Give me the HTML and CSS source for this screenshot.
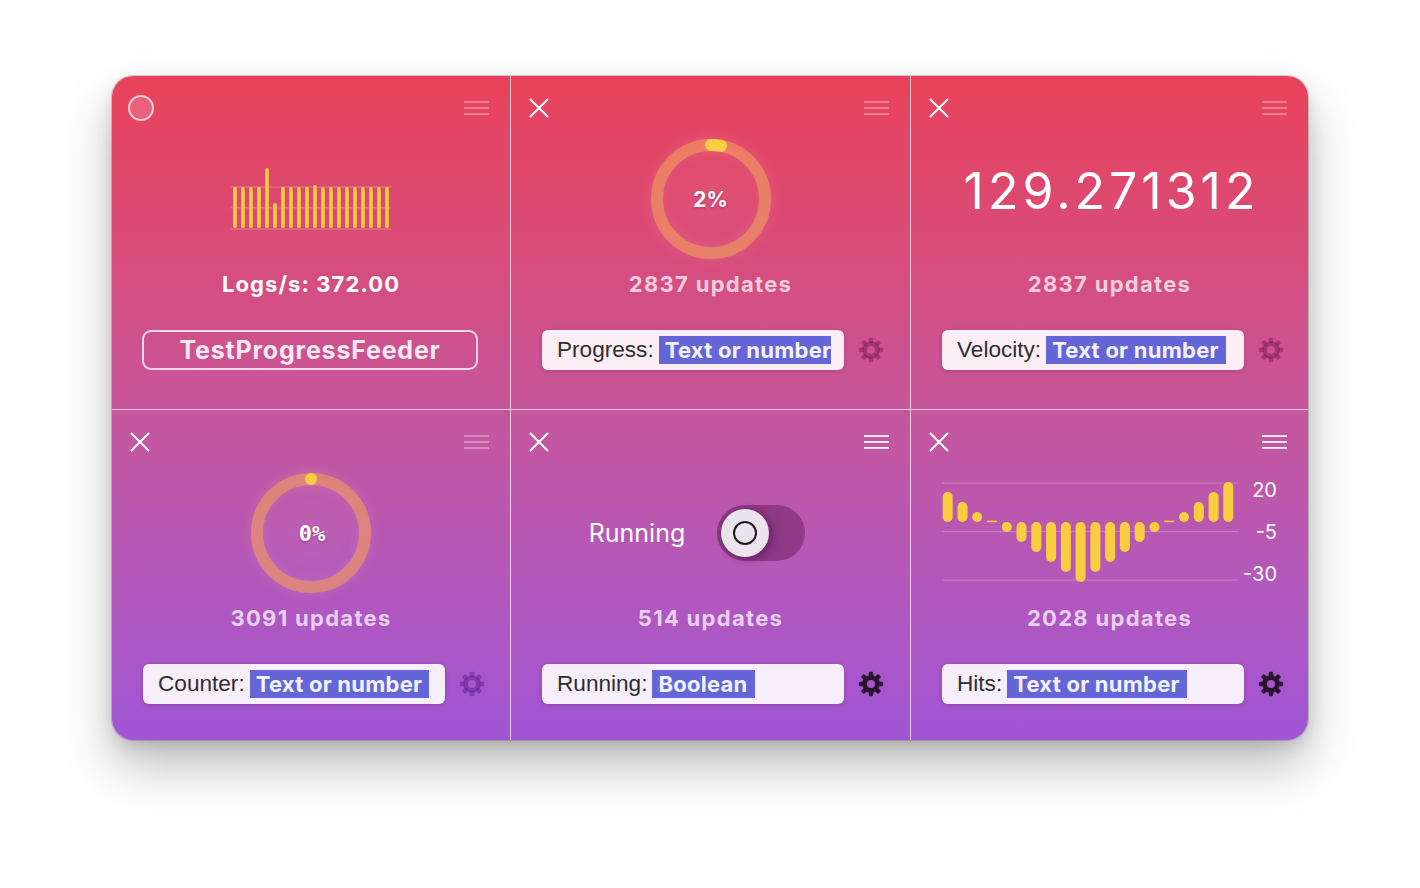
FILE: index.html
```html
<!DOCTYPE html>
<html lang="en">
<head>
<meta charset="utf-8">
<title>Dashboard</title>
<link rel="stylesheet" href="styles.css">
</head>
<body>
<div class="window">

  <!-- Cell 1 -->
  <section class="cell rb bb">
    <header class="head">
      <span class="rec-dot"></span>
      <svg class="menu faded" width="25" height="14" viewBox="0 0 25 14"><rect x="0" y="0.2" width="25" height="1.6"/><rect x="0" y="6.2" width="25" height="1.6"/><rect x="0" y="12.2" width="25" height="1.6"/></svg>
    </header>
    <div class="visual">
      <svg class="logs-chart" width="160" height="66" viewBox="0 0 160 66">
        <g class="grid-lines">
          <rect x="0" y="20.5" width="160" height="1.2"/>
          <rect x="0" y="41.2" width="160" height="1.2"/>
          <rect x="0" y="62.4" width="160" height="1.2"/>
        </g>
        <g class="ybars">
          <line x1="4" y1="22.5" x2="4" y2="60.5"/>
          <line x1="12" y1="22.5" x2="12" y2="60.5"/>
          <line x1="20" y1="22.5" x2="20" y2="60.5"/>
          <line x1="28" y1="22.5" x2="28" y2="60.5"/>
          <line x1="36" y1="3.8" x2="36" y2="60.5"/>
          <line x1="44" y1="38.8" x2="44" y2="60.5"/>
          <line x1="52" y1="22.5" x2="52" y2="60.5"/>
          <line x1="60" y1="22.5" x2="60" y2="60.5"/>
          <line x1="68" y1="22.5" x2="68" y2="60.5"/>
          <line x1="76" y1="22.5" x2="76" y2="60.5"/>
          <line x1="84" y1="20.8" x2="84" y2="60.5"/>
          <line x1="92" y1="23.1" x2="92" y2="60.5"/>
          <line x1="100" y1="22.5" x2="100" y2="60.5"/>
          <line x1="108" y1="22.5" x2="108" y2="60.5"/>
          <line x1="116" y1="22.5" x2="116" y2="60.5"/>
          <line x1="124" y1="22.5" x2="124" y2="60.5"/>
          <line x1="132" y1="22.5" x2="132" y2="60.5"/>
          <line x1="140" y1="22.5" x2="140" y2="60.5"/>
          <line x1="148" y1="22.5" x2="148" y2="60.5"/>
          <line x1="156" y1="22.5" x2="156" y2="60.5"/>
        </g>
      </svg>
    </div>
    <div class="caption bright">Logs/s: 372.00</div>
    <div class="row row-feeder">
      <div class="feeder">TestProgressFeeder</div>
    </div>
  </section>

  <!-- Cell 2 -->
  <section class="cell rb bb">
    <header class="head">
      <svg class="close" width="20" height="20" viewBox="0 0 20 20"><path d="M1 1 L19 19 M19 1 L1 19"/></svg>
      <svg class="menu faded" width="25" height="14" viewBox="0 0 25 14"><rect x="0" y="0.2" width="25" height="1.6"/><rect x="0" y="6.2" width="25" height="1.6"/><rect x="0" y="12.2" width="25" height="1.6"/></svg>
    </header>
    <div class="visual">
      <div class="ring-wrap">
        <svg class="ring ring-orange" width="120" height="120" viewBox="0 0 120 120">
          <circle class="track" cx="60" cy="60" r="54"/>
          <circle class="arc" cx="60" cy="60" r="54" stroke-dasharray="10 400" transform="rotate(-90 60 60)"/>
        </svg>
        <span class="ring-label">2%</span>
      </div>
    </div>
    <div class="caption">2837 updates</div>
    <div class="row">
      <div class="field"><div class="field-inner"><span class="label">Progress:</span><span class="hl">Text or number</span></div></div>
      <svg class="gear gear-faded" width="26" height="26" viewBox="0 0 24 24"><circle cx="12" cy="12" r="5.9" fill="none" stroke="currentColor" stroke-width="4.4"/><g fill="currentColor"><rect x="9.9" y="0.8" width="4.2" height="5" rx="1"/><rect x="9.9" y="0.8" width="4.2" height="5" rx="1" transform="rotate(45 12 12)"/><rect x="9.9" y="0.8" width="4.2" height="5" rx="1" transform="rotate(90 12 12)"/><rect x="9.9" y="0.8" width="4.2" height="5" rx="1" transform="rotate(135 12 12)"/><rect x="9.9" y="0.8" width="4.2" height="5" rx="1" transform="rotate(180 12 12)"/><rect x="9.9" y="0.8" width="4.2" height="5" rx="1" transform="rotate(225 12 12)"/><rect x="9.9" y="0.8" width="4.2" height="5" rx="1" transform="rotate(270 12 12)"/><rect x="9.9" y="0.8" width="4.2" height="5" rx="1" transform="rotate(315 12 12)"/></g></svg>
    </div>
  </section>

  <!-- Cell 3 -->
  <section class="cell bb">
    <header class="head">
      <svg class="close" width="20" height="20" viewBox="0 0 20 20"><path d="M1 1 L19 19 M19 1 L1 19"/></svg>
      <svg class="menu faded" width="25" height="14" viewBox="0 0 25 14"><rect x="0" y="0.2" width="25" height="1.6"/><rect x="0" y="6.2" width="25" height="1.6"/><rect x="0" y="12.2" width="25" height="1.6"/></svg>
    </header>
    <div class="visual">
      <div class="big-number">129.271312</div>
    </div>
    <div class="caption">2837 updates</div>
    <div class="row">
      <div class="field"><div class="field-inner"><span class="label">Velocity:</span><span class="hl">Text or number</span></div></div>
      <svg class="gear gear-faded" width="26" height="26" viewBox="0 0 24 24"><circle cx="12" cy="12" r="5.9" fill="none" stroke="currentColor" stroke-width="4.4"/><g fill="currentColor"><rect x="9.9" y="0.8" width="4.2" height="5" rx="1"/><rect x="9.9" y="0.8" width="4.2" height="5" rx="1" transform="rotate(45 12 12)"/><rect x="9.9" y="0.8" width="4.2" height="5" rx="1" transform="rotate(90 12 12)"/><rect x="9.9" y="0.8" width="4.2" height="5" rx="1" transform="rotate(135 12 12)"/><rect x="9.9" y="0.8" width="4.2" height="5" rx="1" transform="rotate(180 12 12)"/><rect x="9.9" y="0.8" width="4.2" height="5" rx="1" transform="rotate(225 12 12)"/><rect x="9.9" y="0.8" width="4.2" height="5" rx="1" transform="rotate(270 12 12)"/><rect x="9.9" y="0.8" width="4.2" height="5" rx="1" transform="rotate(315 12 12)"/></g></svg>
    </div>
  </section>

  <!-- Cell 4 -->
  <section class="cell rb">
    <header class="head">
      <svg class="close" width="20" height="20" viewBox="0 0 20 20"><path d="M1 1 L19 19 M19 1 L1 19"/></svg>
      <svg class="menu faded" width="25" height="14" viewBox="0 0 25 14"><rect x="0" y="0.2" width="25" height="1.6"/><rect x="0" y="6.2" width="25" height="1.6"/><rect x="0" y="12.2" width="25" height="1.6"/></svg>
    </header>
    <div class="visual">
      <div class="ring-wrap">
        <svg class="ring ring-orange" width="120" height="120" viewBox="0 0 120 120">
          <circle class="track" cx="60" cy="60" r="54"/>
          <circle class="arc" cx="60" cy="60" r="54" stroke-dasharray="0.01 400" transform="rotate(-90 60 60)"/>
        </svg>
        <span class="ring-label mono">0%</span>
      </div>
    </div>
    <div class="caption">3091 updates</div>
    <div class="row">
      <div class="field"><div class="field-inner"><span class="label">Counter:</span><span class="hl">Text or number</span></div></div>
      <svg class="gear gear-purple" width="26" height="26" viewBox="0 0 24 24"><circle cx="12" cy="12" r="5.9" fill="none" stroke="currentColor" stroke-width="4.4"/><g fill="currentColor"><rect x="9.9" y="0.8" width="4.2" height="5" rx="1"/><rect x="9.9" y="0.8" width="4.2" height="5" rx="1" transform="rotate(45 12 12)"/><rect x="9.9" y="0.8" width="4.2" height="5" rx="1" transform="rotate(90 12 12)"/><rect x="9.9" y="0.8" width="4.2" height="5" rx="1" transform="rotate(135 12 12)"/><rect x="9.9" y="0.8" width="4.2" height="5" rx="1" transform="rotate(180 12 12)"/><rect x="9.9" y="0.8" width="4.2" height="5" rx="1" transform="rotate(225 12 12)"/><rect x="9.9" y="0.8" width="4.2" height="5" rx="1" transform="rotate(270 12 12)"/><rect x="9.9" y="0.8" width="4.2" height="5" rx="1" transform="rotate(315 12 12)"/></g></svg>
    </div>
  </section>

  <!-- Cell 5 -->
  <section class="cell rb">
    <header class="head">
      <svg class="close" width="20" height="20" viewBox="0 0 20 20"><path d="M1 1 L19 19 M19 1 L1 19"/></svg>
      <svg class="menu solid" width="25" height="14" viewBox="0 0 25 14"><rect x="0" y="0.2" width="25" height="1.8"/><rect x="0" y="6.1" width="25" height="1.8"/><rect x="0" y="12" width="25" height="1.8"/></svg>
    </header>
    <div class="visual">
      <div class="switch-group">
        <span class="switch-label">Running</span>
        <div class="switch">
          <div class="knob"><span class="knob-ring"></span></div>
        </div>
      </div>
    </div>
    <div class="caption">514 updates</div>
    <div class="row">
      <div class="field"><div class="field-inner"><span class="label">Running:</span><span class="hl">Boolean</span></div></div>
      <svg class="gear gear-dark" width="26" height="26" viewBox="0 0 24 24"><circle cx="12" cy="12" r="5.9" fill="none" stroke="currentColor" stroke-width="4.4"/><g fill="currentColor"><rect x="9.9" y="0.8" width="4.2" height="5" rx="1"/><rect x="9.9" y="0.8" width="4.2" height="5" rx="1" transform="rotate(45 12 12)"/><rect x="9.9" y="0.8" width="4.2" height="5" rx="1" transform="rotate(90 12 12)"/><rect x="9.9" y="0.8" width="4.2" height="5" rx="1" transform="rotate(135 12 12)"/><rect x="9.9" y="0.8" width="4.2" height="5" rx="1" transform="rotate(180 12 12)"/><rect x="9.9" y="0.8" width="4.2" height="5" rx="1" transform="rotate(225 12 12)"/><rect x="9.9" y="0.8" width="4.2" height="5" rx="1" transform="rotate(270 12 12)"/><rect x="9.9" y="0.8" width="4.2" height="5" rx="1" transform="rotate(315 12 12)"/></g></svg>
    </div>
  </section>

  <!-- Cell 6 -->
  <section class="cell">
    <header class="head">
      <svg class="close" width="20" height="20" viewBox="0 0 20 20"><path d="M1 1 L19 19 M19 1 L1 19"/></svg>
      <svg class="menu solid" width="25" height="14" viewBox="0 0 25 14"><rect x="0" y="0.2" width="25" height="1.8"/><rect x="0" y="6.1" width="25" height="1.8"/><rect x="0" y="12" width="25" height="1.8"/></svg>
    </header>
    <div class="visual">
      <div class="hits-chart">
        <svg class="hits-svg" width="296" height="102" viewBox="0 0 296 102">
          <g class="grid-lines">
            <rect x="0" y="0.5" width="296" height="1.2"/>
            <rect x="0" y="49" width="296" height="1.2"/>
            <rect x="0" y="97.5" width="296" height="1.2"/>
          </g>
          <g class="ybars">
            <rect x="0.7" y="10" width="10" height="30" rx="5"/>
            <rect x="15.5" y="20" width="10" height="20" rx="5"/>
            <rect x="30.2" y="30" width="10" height="10" rx="5"/>
            <rect x="45" y="38.6" width="10" height="1.6"/>
            <rect x="59.8" y="40" width="10" height="10" rx="5"/>
            <rect x="74.5" y="40" width="10" height="20" rx="5"/>
            <rect x="89.3" y="40" width="10" height="30" rx="5"/>
            <rect x="104.1" y="40" width="10" height="40" rx="5"/>
            <rect x="118.9" y="40" width="10" height="50" rx="5"/>
            <rect x="133.6" y="40" width="10" height="60" rx="5"/>
            <rect x="148.4" y="40" width="10" height="50" rx="5"/>
            <rect x="163.2" y="40" width="10" height="40" rx="5"/>
            <rect x="177.9" y="40" width="10" height="30" rx="5"/>
            <rect x="192.7" y="40" width="10" height="20" rx="5"/>
            <rect x="207.5" y="40" width="10" height="10" rx="5"/>
            <rect x="222.2" y="38.6" width="10" height="1.6"/>
            <rect x="237" y="30" width="10" height="10" rx="5"/>
            <rect x="251.8" y="20" width="10" height="20" rx="5"/>
            <rect x="266.6" y="10" width="10" height="30" rx="5"/>
            <rect x="281.3" y="0" width="10" height="40" rx="5"/>
          </g>
        </svg>
        <div class="axis">
          <span>20</span>
          <span>-5</span>
          <span>-30</span>
        </div>
      </div>
    </div>
    <div class="caption">2028 updates</div>
    <div class="row">
      <div class="field"><div class="field-inner"><span class="label">Hits:</span><span class="hl">Text or number</span></div></div>
      <svg class="gear gear-dark" width="26" height="26" viewBox="0 0 24 24"><circle cx="12" cy="12" r="5.9" fill="none" stroke="currentColor" stroke-width="4.4"/><g fill="currentColor"><rect x="9.9" y="0.8" width="4.2" height="5" rx="1"/><rect x="9.9" y="0.8" width="4.2" height="5" rx="1" transform="rotate(45 12 12)"/><rect x="9.9" y="0.8" width="4.2" height="5" rx="1" transform="rotate(90 12 12)"/><rect x="9.9" y="0.8" width="4.2" height="5" rx="1" transform="rotate(135 12 12)"/><rect x="9.9" y="0.8" width="4.2" height="5" rx="1" transform="rotate(180 12 12)"/><rect x="9.9" y="0.8" width="4.2" height="5" rx="1" transform="rotate(225 12 12)"/><rect x="9.9" y="0.8" width="4.2" height="5" rx="1" transform="rotate(270 12 12)"/><rect x="9.9" y="0.8" width="4.2" height="5" rx="1" transform="rotate(315 12 12)"/></g></svg>
    </div>
  </section>

</div>
</body>
</html>
```

FILE: styles.css
```css
html, body {
  margin: 0;
  padding: 0;
  background: #ffffff;
}

body {
  width: 1420px;
  height: 888px;
  overflow: hidden;
  font-family: Inter, "Liberation Sans", "DejaVu Sans", sans-serif;
}

.window {
  margin: 76px 0 0 112px;
  width: 1196px;
  height: 664px;
  border-radius: 21px;
  overflow: hidden;
  background: linear-gradient(180deg, #e9425a 0%, #d94b78 25%, #c6569b 50%, #b458ba 75%, #a055d5 100%);
  box-shadow:
    0 0 0 1px rgba(0, 0, 0, 0.17),
    0 26px 50px rgba(0, 0, 0, 0.26),
    0 6px 16px rgba(0, 0, 0, 0.12);
  display: grid;
  grid-template-columns: 399px 400px 397px;
  grid-template-rows: 334px 330px;
}

.cell {
  display: flex;
  flex-direction: column;
  min-width: 0;
  box-sizing: border-box;
}

.rb { border-right: 1px solid rgba(242, 226, 236, 0.85); }
.bb { border-bottom: 1px solid rgba(242, 226, 236, 0.85); }

/* header */
.head {
  flex: none;
  height: 64px;
  display: flex;
  align-items: center;
  justify-content: space-between;
  padding: 0 21px 0 18px;
}

.rec-dot {
  width: 26px;
  height: 26px;
  margin-left: -2px;
  box-sizing: border-box;
  border-radius: 50%;
  border: 2px solid rgba(255, 235, 240, 0.8);
  background: rgba(255, 255, 255, 0.16);
}

.close path {
  stroke: #ffffff;
  stroke-width: 2;
  fill: none;
}

.menu.faded rect { fill: rgba(255, 255, 255, 0.38); }
.menu.solid rect { fill: rgba(255, 255, 255, 0.95); }

/* visual area */
.visual {
  flex: none;
  height: 118px;
  display: flex;
  align-items: center;
  justify-content: center;
}

.grid-lines rect { fill: rgba(255, 255, 255, 0.22); }

.logs-chart .ybars line {
  stroke: #f8cd40;
  stroke-width: 3.6;
  stroke-linecap: round;
}

.hits-svg { overflow: visible; }
.hits-svg .ybars rect { fill: #f8cd40; }

.ring-wrap {
  width: 120px;
  height: 120px;
  display: grid;
  place-items: center;
  border-radius: 50%;
  background: radial-gradient(circle, rgba(255, 255, 255, 0.06) 0%, rgba(255, 255, 255, 0) 70%);
}

.ring-wrap > * { grid-area: 1 / 1; }

.ring {
  filter: drop-shadow(0 0 6px rgba(255, 200, 200, 0.25));
}

.ring .track {
  fill: none;
  stroke: rgba(240, 155, 90, 0.6);
  stroke-width: 12;
}

.ring .arc {
  fill: none;
  stroke: #f8cf42;
  stroke-width: 12;
  stroke-linecap: round;
}

.ring-label {
  color: #ffffff;
  font-weight: 700;
  font-size: 21px;
  text-shadow: 0 1px 3px rgba(80, 0, 40, 0.35);
}

.ring-label.mono {
  font-family: "DejaVu Sans Mono", "Liberation Mono", monospace;
  font-size: 22px;
  margin-left: 2px;
}

.big-number {
  color: #ffffff;
  font-size: 50px;
  font-weight: 400;
  letter-spacing: 4px;
  margin-left: 4px;
  margin-bottom: 16px;
}

/* switch */
.switch-group {
  display: flex;
  align-items: center;
  gap: 32px;
  margin-right: 27px;
}

.switch-label {
  color: #ffffff;
  font-size: 25px;
  font-weight: 400;
}

.switch {
  width: 88px;
  height: 56px;
  box-sizing: border-box;
  padding: 4px;
  border-radius: 28px;
  background: linear-gradient(90deg, rgba(90, 20, 80, 0.5), rgba(90, 20, 80, 0.42));
  display: flex;
  align-items: center;
}

.knob {
  width: 48px;
  height: 48px;
  border-radius: 50%;
  background: #ece4ec;
  box-shadow: 3px 2px 9px rgba(60, 0, 60, 0.45);
  display: flex;
  align-items: center;
  justify-content: center;
}

.knob-ring {
  width: 24px;
  height: 24px;
  box-sizing: border-box;
  border-radius: 50%;
  border: 2.4px solid #1c1a1e;
}

/* hits chart */
.hits-chart {
  display: flex;
  align-items: stretch;
  width: 335px;
  height: 102px;
}

.axis {
  flex: 1;
  display: flex;
  flex-direction: column;
  justify-content: space-between;
  align-items: flex-end;
  color: #ffffff;
  font-size: 20px;
  line-height: 20px;
  margin-top: -2px;
}

/* caption */
.caption {
  flex: none;
  height: 52px;
  display: flex;
  align-items: center;
  justify-content: center;
  font-weight: 700;
  font-size: 22px;
  letter-spacing: 1.3px;
  color: rgba(255, 255, 255, 0.74);
}

.caption.bright {
  color: #ffffff;
  letter-spacing: 1.1px;
}

/* bottom row */
.row {
  flex: none;
  margin-top: 20px;
  height: 40px;
  display: flex;
  align-items: center;
  padding-left: 31px;
}

.row-feeder { padding-left: 30px; }

.feeder {
  width: 336px;
  height: 40px;
  box-sizing: border-box;
  border: 2px solid rgba(255, 238, 246, 0.85);
  border-radius: 9px;
  display: flex;
  align-items: center;
  justify-content: center;
  color: #fae8f2;
  font-size: 25px;
  font-weight: 700;
  letter-spacing: 0.8px;
}

.field {
  width: 302px;
  height: 40px;
  box-sizing: border-box;
  padding: 0 13px 0 15px;
  border-radius: 6px;
  background: rgba(255, 255, 255, 0.9);
  box-shadow: 0 1px 4px rgba(70, 0, 50, 0.22);
  display: flex;
  align-items: center;
}

.field-inner {
  flex: 1;
  min-width: 0;
  display: flex;
  align-items: center;
  overflow: hidden;
  white-space: nowrap;
}

.label {
  flex: none;
  font-family: "Liberation Sans", Arial, sans-serif;
  font-size: 22.6px;
  color: #2f2d30;
}

.hl {
  flex: none;
  margin-left: 5px;
  height: 28px;
  line-height: 28px;
  padding: 0 7px 0 6px;
  background: #6466d8;
  color: #f3f2ff;
  font-weight: 700;
  font-size: 22px;
  letter-spacing: 0.25px;
}

.gear {
  flex: none;
  margin-left: 14px;
}

.gear-faded { color: rgba(120, 20, 80, 0.45); }
.gear-purple { color: rgba(95, 30, 150, 0.5); }
.gear-dark { color: #2a1430; }
```
